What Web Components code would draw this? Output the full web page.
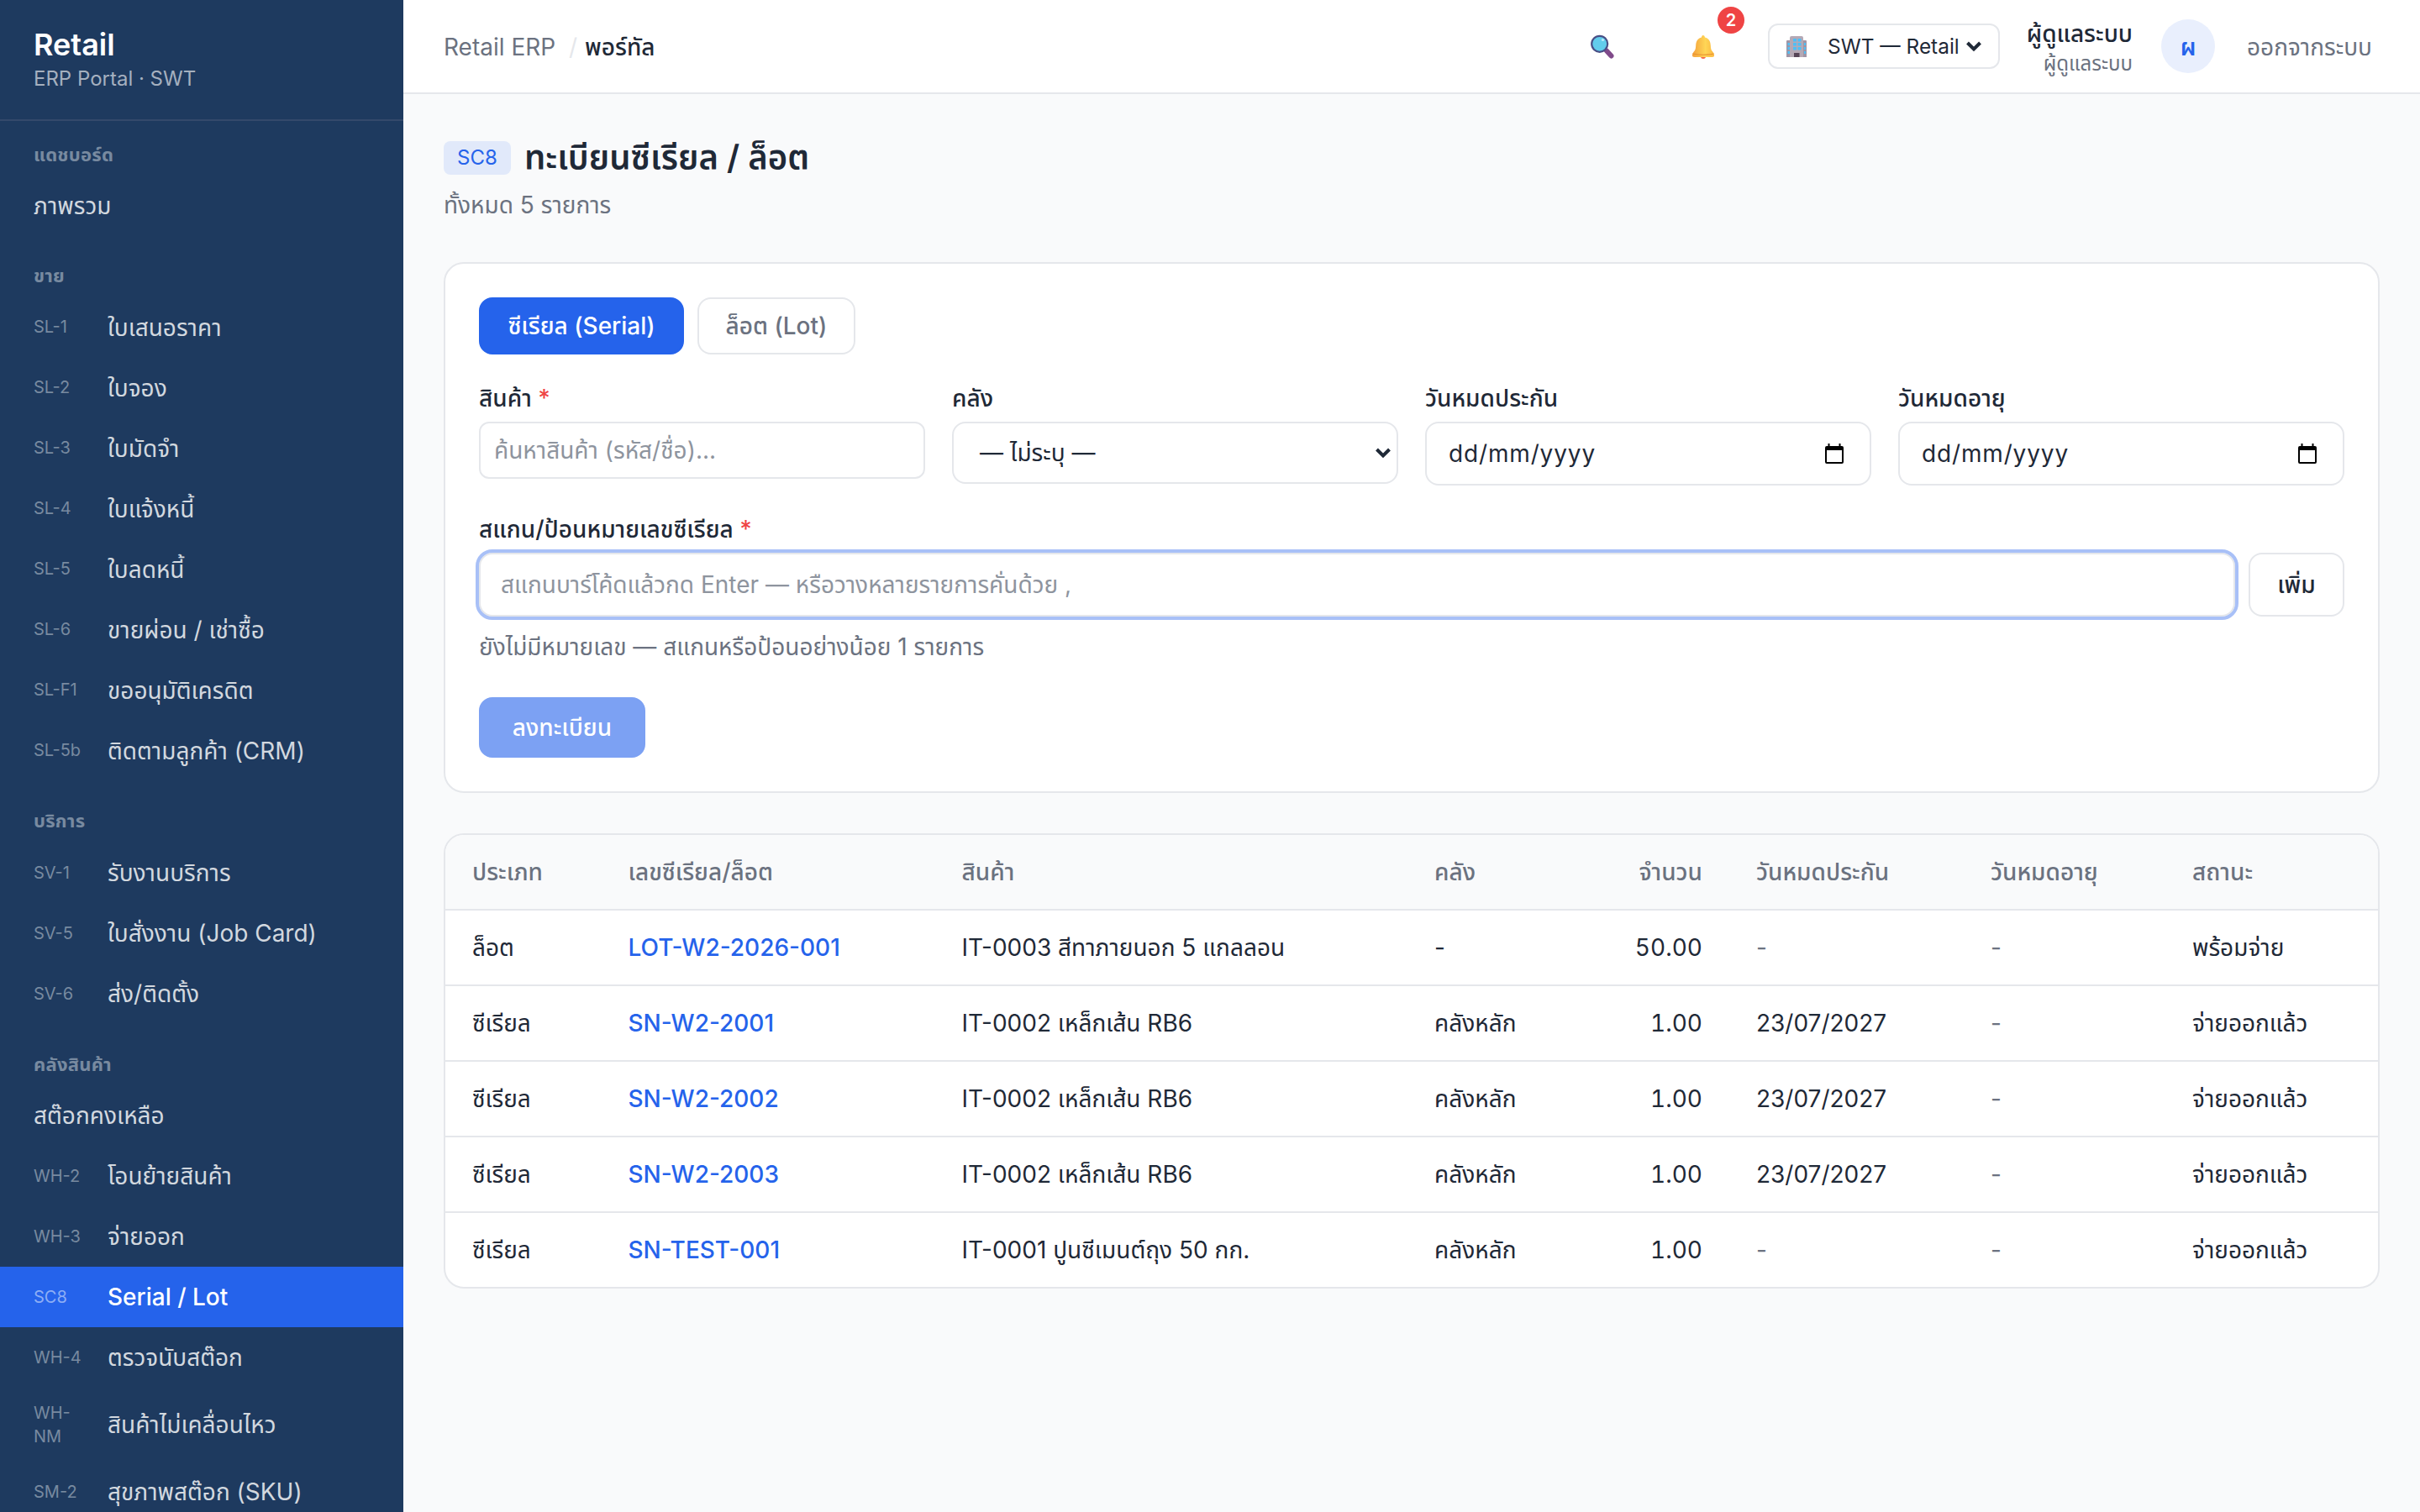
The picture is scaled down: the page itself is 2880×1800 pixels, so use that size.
<!DOCTYPE html>
<html lang="th">
<head>
<meta charset="utf-8">
<title>Retail ERP</title>
<style>
body {
  margin: 0;
  height: 1800px;
  overflow: hidden;
  background: #f9fafb;
  color: #1f2937;
  font-family: Inter, "Noto Sans Thai", "IBM Plex Sans Thai", "Noto Sans", sans-serif;
  font-size: 28px;
}
</style>
</head>
<body>
<erp-app></erp-app>

<script>
// every element gets its own shadow root
class Base extends HTMLElement {
  constructor() {
    super();
    this.attachShadow({mode: "open"});
  }
  connectedCallback() {
    this.shadowRoot.innerHTML = this.render();
  }
  attr(name) {
    return this.getAttribute(name) || "";
  }
}

class NavItem extends Base {
  render() {
    const code = this.attr("code");
    return `
<style>
:host { display: flex; align-items: center; height: 72px; padding: 0 40px; color: #d2d8df; }
:host([tall]) { height: 88px; }
:host([active]) { background: #2563eb; color: #fff; font-weight: 500; }
.code { width: 64px; margin-right: 24px; flex: none; font-size: 20px; line-height: 28px; color: #788aa0; font-weight: 400; }
:host([tall]) .code { padding-top: 1px; }
:host([active]) .code { color: #8daef5; }
.label { white-space: nowrap; line-height: 40px; padding-top: 1px; }
</style>
${code ? `<span class="code">${code}</span>` : ""}
<span class="label"><slot></slot></span>`;
  }
}

class NavSection extends Base {
  render() {
    return `
<style>
:host { display: block; }
h4 { margin: 0; height: 73.33px; padding: 31px 40px 0; box-sizing: border-box; font-size: 22px; line-height: 34px; font-weight: 700; color: #788aa0; letter-spacing: .25px; white-space: nowrap; }
:host([first]) h4 { height: 64px; padding-top: 23px; }
</style>
<h4>${this.attr("title")}</h4>
<slot></slot>`;
  }
}

const sections = [
  ["แดชบอร์ด", [["", "ภาพรวม"]]],
  ["ขาย", [["SL-1", "ใบเสนอราคา"], ["SL-2", "ใบจอง"], ["SL-3", "ใบมัดจำ"], ["SL-4", "ใบแจ้งหนี้"], ["SL-5", "ใบลดหนี้"], ["SL-6", "ขายผ่อน / เช่าซื้อ"], ["SL-F1", "ขออนุมัติเครดิต"], ["SL-5b", "ติดตามลูกค้า (CRM)"]]],
  ["บริการ", [["SV-1", "รับงานบริการ"], ["SV-5", "ใบสั่งงาน (Job Card)"], ["SV-6", "ส่ง/ติดตั้ง"]]],
  ["คลังสินค้า", [["", "สต๊อกคงเหลือ"], ["WH-2", "โอนย้ายสินค้า"], ["WH-3", "จ่ายออก"], ["SC8", "Serial / Lot"], ["WH-4", "ตรวจนับสต๊อก"], ["WH-NM", "สินค้าไม่เคลื่อนไหว"], ["SM-2", "สุขภาพสต๊อก (SKU)"]]]
];

class SideBar extends Base {
  render() {
    return `
<style>
:host { display: block; width: 480px; height: 1800px; flex: none; overflow: hidden; background: #1e3a5f; }
header { height: 144px; box-sizing: border-box; padding: 30px 40px 0; border-bottom: 2px solid #34496b; }
.name { font-size: 36px; line-height: 46px; font-weight: 600; color: #fff; }
.sub { font-size: 24px; line-height: 36px; color: #a5b0bf; }
</style>
<header><div class="name">Retail</div><div class="sub">ERP Portal · SWT</div></header>
<nav>
${sections.map((s, i) => `<nav-section title="${s[0]}"${i ? "" : " first"}>${s[1].map(n =>
  `<nav-item code="${n[0]}"${n[0] === "SC8" ? " active" : ""}${n[0] === "WH-NM" ? " tall" : ""}>${n[1]}</nav-item>`).join("")}</nav-section>`).join("")}
</nav>`;
  }
}

const icons = {
  search: `<svg width="30" height="30" viewBox="0 0 30 30"><path d="M20 19.500l5.500 6" stroke="#804a8a" stroke-width="6" stroke-linecap="round"/><circle cx="11.700" cy="11.300" r="9.500" fill="#62cdec" stroke="#494f86" stroke-width="2.200"/><circle cx="15.500" cy="6.500" r="1.600" fill="#b9ecfa"/></svg>`,
  bell: `<svg width="28" height="30" viewBox="0 0 28 30"><defs><linearGradient id="g"><stop offset="0" stop-color="#f3a03c"/><stop offset=".6" stop-color="#ffd656"/><stop offset="1" stop-color="#fbb741"/></linearGradient></defs><circle cx="14" cy="26" r="3" fill="#f4694a"/><path d="M14 1q1.800 0 2 2.500C20.500 4.500 22.500 8 22.800 13c.2 4 .6 6 2.400 7.500q1.800 1.500 1.800 5.500-1 1-3 1H4q-2 0-3-1 0-4 1.800-5.500C4.600 19 5 17 5.200 13 5.500 8 7.500 4.500 12 3.500 12.200 1 14 1 14 1z" fill="url(#g)"/><path d="M1.500 23q12.500 2.500 25 0" fill="none" stroke="#e8912f" stroke-width="1.200"/></svg>`,
  building: `<svg width="26" height="28" viewBox="0 0 26 28"><path d="M1 8q0-1 1-1h5v20H1zM19 7h5q1 0 1 1v19h-6z" fill="#a095a5"/><path d="M5 27V4q0-2 2-2h12q2 0 2 2v23z" fill="#b5a9b5"/><path d="M9 5h4v3.500H9zm5.500 0h4v3.500h-4zM9 10h4v3.500H9zm5.500 0h4v3.500h-4zM9 15h4v3.500H9zm5.500 0h4v3.500h-4zM2.500 10H5v3H2.500zm0 5H5v3H2.500zm0 5H5v3H2.500zM22 10h2v3h-2zm0 5h2v3h-2zm0 5h2v3h-2z" fill="#4fbff5"/><path d="M10 22h6.500v5H10z" fill="#574657"/></svg>`,
  chevron: `<svg width="20" height="14" viewBox="0 0 20 14"><path d="M2.500 3l7.500 7.500L17.500 3" fill="none" stroke="#1f2937" stroke-width="4"/></svg>`,
  calendar: `<svg width="24" height="26" viewBox="0 0 24 26"><path d="M4.500 1h2v3h11V1h2v3H21q2 0 2 2v17q0 2-2 2H3q-2 0-2-2V6q0-2 2-2h1.500zM3 9v14h18V9z" fill="#000" fill-rule="evenodd"/></svg>`
};

class TopBar extends Base {
  render() {
    return `
<style>
:host { display: flex; align-items: center; height: 112px; box-sizing: border-box; border-bottom: 2px solid #e5e7eb; background: #fff; padding: 0 54px 0 48px; white-space: nowrap; }
.crumb { flex: 1; color: #6b7280; padding-top: 4px; }
.crumb i { color: #e5e7eb; font-style: normal; margin: 0 0 0 8px; }
.crumb b { color: #1f2937; font-weight: 500; margin-left: 9px; }
.icon { display: flex; position: relative; width: 36px; justify-content: center; }
.search { padding-top: 2px; }
.bell { margin-left: 84px; padding-top: 2px; }
.badge { position: absolute; left: 35px; top: -31px; width: 32px; height: 32px; border-radius: 16px; background: #ef4444; color: #fff; font-size: 20px; line-height: 32px; font-weight: 600; text-align: center; }
.org { display: flex; align-items: center; width: 276px; height: 54px; box-sizing: border-box; border: 2px solid #e5e7eb; border-radius: 12px; margin-left: 59px; padding-left: 19px; font-size: 24.4px; }
.org span { margin: 0 7px 0 24px; }
.user { width: 158px; text-align: right; padding-top: 4px; }
.name { font-size: 28px; line-height: 38px; font-weight: 500; }
.role { font-size: 24px; line-height: 34px; color: #6b7280; }
.avatar { width: 64px; height: 64px; line-height: 66px; border-radius: 50%; margin: 0 38px 0 34px; text-align: center; background: #e9effd; color: #2563eb; font-size: 28px; font-weight: 600; }
.out { color: #6b7280; width: 152px; padding-top: 4px; }
</style>
<div class="crumb">Retail ERP <i>/</i><b>พอร์ทัล</b></div>
<div class="icon search">${icons.search}</div>
<div class="icon bell">${icons.bell}<span class="badge">2</span></div>
<div class="org">${icons.building}<span>SWT — Retail</span>${icons.chevron}</div>
<div class="user"><div class="name">ผู้ดูแลระบบ</div><div class="role">ผู้ดูแลระบบ</div></div>
<div class="avatar">ผ</div>
<div class="out">ออกจากระบบ</div>`;
  }
}

class FormField extends Base {
  render() {
    const kind = this.attr("kind");
    return `
<style>
:host { display: block; min-width: 0; }
label { display: block; height: 56px; line-height: 56px; font-weight: 500; white-space: nowrap; }
label i { color: #ef4444; font-style: normal; }
.box { display: flex; align-items: center; justify-content: space-between; box-sizing: border-box; border: 2px solid #e5e7eb; border-radius: 16px; background: #fff; height: 76px; padding: 0 26px; white-space: nowrap; }
.search { height: 68px; padding: 0 16px; border-radius: 12px; color: #8e949e; }
.select { height: 74px; padding: 0 6px 0 31px; }
.search span, .scan span { padding-top: 2px; }
.select span { padding-top: 3px; }
.date { padding-right: 30px; }
.date span { letter-spacing: .85px; }
.scan { padding: 0 24px; color: #8e949e; outline: 4px solid #a8c0f7; }
</style>
<label>${this.attr("label")}${this.hasAttribute("required") ? " <i>*</i>" : ""}</label>
<div class="box ${kind}"><span><slot></slot></span>${kind === "select" ? icons.chevron : ""}${kind === "date" ? icons.calendar : ""}</div>`;
  }
}

class UiButton extends Base {
  render() {
    return `
<style>
:host { display: flex; align-items: center; justify-content: center; box-sizing: border-box; height: 68px; border: 2px solid #e5e7eb; border-radius: 16px; background: #fff; font-weight: 500; white-space: nowrap; padding-top: 2px; }
:host([kind=primary]) { background: #2563eb; border-color: #2563eb; color: #fff; }
:host([kind=muted]) { color: #6b7280; }
:host([kind=disabled]) { background: #7ca1f3; border-color: #7ca1f3; color: #fff; height: 72px; }
:host([kind=plain]) { height: 76px; }
</style>
<slot></slot>`;
  }
}

class SerialForm extends Base {
  render() {
    return `
<style>
:host { display: block; box-sizing: border-box; height: 632px; border: 2px solid #e5e7eb; border-radius: 24px; background: #fff; padding: 40px; }
.tabs { display: flex; gap: 16px; margin-bottom: 24px; }
.grid { display: grid; grid-template-columns: repeat(4, 1fr); gap: 32px; }
.scan { display: flex; gap: 16px; align-items: flex-end; margin-top: 24px; }
.scan form-field { flex: 1; }
p { margin: 16px 0 40px; line-height: 40px; color: #6b7280; }
</style>
<div class="tabs">
  <ui-button kind="primary" style="width:244px">ซีเรียล (Serial)</ui-button>
  <ui-button kind="muted" style="width:188px">ล็อต (Lot)</ui-button>
</div>
<div class="grid">
  <form-field kind="search" label="สินค้า" required>ค้นหาสินค้า (รหัส/ชื่อ)...</form-field>
  <form-field kind="select" label="คลัง">— ไม่ระบุ —</form-field>
  <form-field kind="date" label="วันหมดประกัน">dd/mm/yyyy</form-field>
  <form-field kind="date" label="วันหมดอายุ">dd/mm/yyyy</form-field>
</div>
<div class="scan">
  <form-field kind="scan" label="สแกน/ป้อนหมายเลขซีเรียล" required>สแกนบาร์โค้ดแล้วกด Enter — หรือวางหลายรายการคั่นด้วย ,</form-field>
  <ui-button kind="plain" style="width:114px">เพิ่ม</ui-button>
</div>
<p>ยังไม่มีหมายเลข — สแกนหรือป้อนอย่างน้อย 1 รายการ</p>
<ui-button kind="disabled" style="width:198px">ลงทะเบียน</ui-button>`;
  }
}

const heads = ["ประเภท", "เลขซีเรียล/ล็อต", "สินค้า", "คลัง", "จำนวน", "วันหมดประกัน", "วันหมดอายุ", "สถานะ"];
const rows = [
  ["ล็อต", "LOT-W2-2026-001", "IT-0003 สีทาภายนอก 5 แกลลอน", "-", "50.00", "-", "-", "พร้อมจ่าย"],
  ["ซีเรียล", "SN-W2-2001", "IT-0002 เหล็กเส้น RB6", "คลังหลัก", "1.00", "23/07/2027", "-", "จ่ายออกแล้ว"],
  ["ซีเรียล", "SN-W2-2002", "IT-0002 เหล็กเส้น RB6", "คลังหลัก", "1.00", "23/07/2027", "-", "จ่ายออกแล้ว"],
  ["ซีเรียล", "SN-W2-2003", "IT-0002 เหล็กเส้น RB6", "คลังหลัก", "1.00", "23/07/2027", "-", "จ่ายออกแล้ว"],
  ["ซีเรียล", "SN-TEST-001", "IT-0001 ปูนซีเมนต์ถุง 50 กก.", "คลังหลัก", "1.00", "-", "-", "จ่ายออกแล้ว"]
];

class SerialTable extends Base {
  render() {
    return `
<style>
:host { display: block; margin-top: 48px; border: 2px solid #e5e7eb; border-radius: 24px; background: #fff; overflow: hidden; }
.row { display: grid; grid-template-columns: 185.5px 397px 562.5px 200px 183px 279px 240px 1fr; height: 88px; line-height: 88px; border-top: 2px solid #e5e7eb; white-space: nowrap; }
.row span { padding: 0 32px; }
.row span:nth-child(5) { text-align: right; font-variant-numeric: tabular-nums; }
.head { background: #f9fafb; color: #6b7280; font-weight: 500; border-top: 0; }
.row .link { color: #2563eb; font-weight: 500; }
.row .none { color: #6b7280; }
</style>
<div class="row head">${heads.map(h => `<span>${h}</span>`).join("")}</div>
${rows.map(r => `<div class="row">${r.map((c, i) => `<span class="${i === 1 ? "link" : c === "-" && i > 3 ? "none" : ""}">${c}</span>`).join("")}</div>`).join("")}`;
  }
}

class ErpApp extends Base {
  render() {
    return `
<style>
:host { display: flex; }
main { flex: 1; min-width: 0; }
.page { padding: 48px; }
.head { display: flex; align-items: center; height: 56px; gap: 16px; }
.tag { width: 80px; height: 40px; line-height: 40px; border-radius: 8px; background: #e1e9fa; color: #2563eb; font-size: 24px; text-align: center; }
h1 { margin: 0; font-size: 40px; line-height: 56px; font-weight: 600; white-space: nowrap; }
p { margin: 8px 0 48px; line-height: 40px; color: #6b7280; }
</style>
<side-bar></side-bar>
<main>
  <top-bar></top-bar>
  <div class="page">
    <div class="head"><span class="tag">SC8</span><h1>ทะเบียนซีเรียล / ล็อต</h1></div>
    <p>ทั้งหมด 5 รายการ</p>
    <serial-form></serial-form>
    <serial-table></serial-table>
  </div>
</main>`;
  }
}

customElements.define("nav-item", NavItem);
customElements.define("nav-section", NavSection);
customElements.define("side-bar", SideBar);
customElements.define("top-bar", TopBar);
customElements.define("form-field", FormField);
customElements.define("ui-button", UiButton);
customElements.define("serial-form", SerialForm);
customElements.define("serial-table", SerialTable);
customElements.define("erp-app", ErpApp);
</script>
</body>
</html>
